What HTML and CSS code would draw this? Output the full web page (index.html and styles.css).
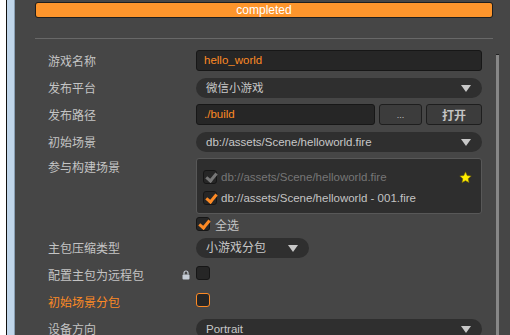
FILE: index.html
```html
<!DOCTYPE html>
<html lang="zh">
<head>
    <meta charset="UTF-8">
    <title>构建发布</title>
    <link rel="stylesheet" href="styles.css">
</head>
<body>
<div class="edge"></div>
<div class="panel">
    <div class="progress"><div class="progress-fill">completed</div></div>
    <hr class="divider">

    <div class="body">
        <div class="form">
            <div class="row">
                <label class="label">游戏名称</label>
                <div class="field"><div class="input accent">hello_world</div></div>
            </div>
            <div class="row">
                <label class="label">发布平台</label>
                <div class="field"><div class="select">微信小游戏<span class="arrow"></span></div></div>
            </div>
            <div class="row">
                <label class="label">发布路径</label>
                <div class="field path">
                    <div class="input accent">./build</div>
                    <button class="btn dots">...</button>
                    <button class="btn open">打开</button>
                </div>
            </div>
            <div class="row">
                <label class="label">初始场景</label>
                <div class="field"><div class="select">db://assets/Scene/helloworld.fire<span class="arrow"></span></div></div>
            </div>
            <div class="row tall">
                <label class="label">参与构建场景</label>
                <div class="field">
                    <div class="scene-list">
                        <div class="scene disabled">
                            <span class="check checked"></span>
                            <span class="scene-name">db://assets/Scene/helloworld.fire</span>
                            <svg class="star" width="13" height="13" viewBox="0 0 24 24"><path d="M12 1.5l3.2 7 7.5.7-5.7 5 1.7 7.4L12 17.8l-6.7 3.8 1.7-7.4-5.7-5 7.5-.7z" fill="#ffee00" stroke="#6b5a00" stroke-width="1"/></svg>
                        </div>
                        <div class="scene">
                            <span class="check checked"></span>
                            <span class="scene-name">db://assets/Scene/helloworld - 001.fire</span>
                        </div>
                    </div>
                    <div class="select-all">
                        <span class="check checked"></span>全选
                    </div>
                </div>
            </div>
            <div class="row">
                <label class="label">主包压缩类型</label>
                <div class="field"><div class="select short">小游戏分包<span class="arrow"></span></div></div>
            </div>
            <div class="row">
                <label class="label">配置主包为远程包
                    <svg class="lock" width="8" height="10" viewBox="0 0 8 10"><path d="M2 4.5V3a2 2 0 0 1 4 0v1.5" fill="none" stroke="#c6cdd6" stroke-width="1.2"/><rect x="0.5" y="4.5" width="7" height="5" rx="1" fill="#c6cdd6"/></svg>
                </label>
                <div class="field"><span class="check"></span></div>
            </div>
            <div class="row">
                <label class="label warn">初始场景分包</label>
                <div class="field"><span class="check hot"></span></div>
            </div>
            <div class="row">
                <label class="label">设备方向</label>
                <div class="field"><div class="select">Portrait<span class="arrow"></span></div></div>
            </div>
        </div>
        <div class="scrollbar"></div>
    </div>
</div>
</body>
</html>
```

FILE: styles.css
```css
html, body {
    margin: 0;
    padding: 0;
    height: 100%;
    overflow: hidden;
}

body {
    display: flex;
    background: #464646;
    font-family: "Liberation Sans", "Noto Sans CJK SC", sans-serif;
    font-size: 12px;
    color: #c4c4c4;
}

/* window edge on the left */
.edge {
    width: 6px;
    background: #fff;
    border-right: 1px solid #111;
    position: relative;
}

.edge::after {
    content: "";
    position: absolute;
    left: 7px;
    top: 0;
    bottom: 0;
    width: 7px;
    background: #c0d6ea;
    border-right: 1px solid #8aa0b4;
}

.panel {
    flex: 1;
    padding-left: 28px;
    display: flex;
    flex-direction: column;
}

.progress {
    width: 456px;
    margin-top: 2px;
    border: 1px solid #1e1e1e;
    border-radius: 3px;
    background: #1e1e1e;
}

.progress-fill {
    height: 14px;
    line-height: 14px;
    background: #fd952c;
    border-radius: 2px;
    color: #fff;
    text-align: center;
}

.divider {
    width: 458px;
    margin: 20px 0 0 0;
    border: none;
    border-top: 1px solid #686868;
}

.body {
    display: flex;
    flex: 1;
}

.form {
    width: 461px;
    padding-top: 11px;
}

.row {
    display: flex;
    align-items: center;
    height: 21px;
    margin-bottom: 6px;
}

.row.tall {
    align-items: flex-start;
    height: auto;
}

.row.tall .label {
    line-height: 21px;
}

.label {
    width: 161px;
    padding-left: 13px;
    padding-right: 6px;
    box-sizing: border-box;
    display: flex;
    align-items: center;
    justify-content: space-between;
}

.label.warn {
    color: #fd8a25;
}

.field {
    width: 286px;
}

.field.path {
    display: flex;
    gap: 4px;
}

.input {
    height: 19px;
    line-height: 19px;
    padding: 0 7px;
    background: #262626;
    border: 1px solid #171717;
    border-radius: 3px;
    font-size: 11.5px;
}

.input.accent {
    color: #fd8a25;
}

.field.path .input {
    flex: 1;
}

.btn {
    height: 21px;
    border: 1px solid #1e1e1e;
    border-radius: 3px;
    background: #3c3c3c;
    color: #c4c4c4;
    font-family: inherit;
    font-size: 12px;
    padding: 0;
}

.btn.dots {
    width: 43px;
    font-size: 9px;
}

.btn.open {
    width: 56px;
    font-weight: bold;
}

.select {
    position: relative;
    height: 20px;
    line-height: 20px;
    padding: 0 10px;
    background: #2f2f2f;
    border-radius: 10px;
    color: #c8c8c8;
    font-size: 11.5px;
}

.select.short {
    width: 93px;
    font-size: 12px;
}

.arrow {
    position: absolute;
    right: 11px;
    top: 7px;
    border-left: 5px solid transparent;
    border-right: 5px solid transparent;
    border-top: 7px solid #c8c8c8;
}

.scene-list {
    border: 1px solid #585858;
    border-radius: 3px;
    background: #2e2e2e;
    padding: 11px 5px 0 6px;
    box-sizing: border-box;
    width: 286px;
    height: 56px;
    font-size: 11.5px;
}

.scene {
    display: flex;
    align-items: center;
    height: 14px;
    margin-bottom: 7px;
    gap: 4px;
}

.scene.disabled .scene-name {
    color: #767676;
}

.scene.disabled .check.checked::after {
    border-color: #777;
}

.star {
    margin-left: auto;
    margin-right: 4px;
}

.check {
    display: inline-block;
    position: relative;
    width: 12px;
    height: 12px;
    background: #262626;
    border: 1px solid #161616;
    border-radius: 3px;
    flex: none;
}

.check.checked::after {
    content: "";
    position: absolute;
    left: 4px;
    top: 0;
    width: 4px;
    height: 8px;
    border-right: 3px solid #fd8a25;
    border-bottom: 3px solid #fd8a25;
    transform: rotate(40deg);
}

.check.hot {
    border-color: #fd8a25;
}

.select-all {
    display: flex;
    align-items: center;
    gap: 5px;
    margin-top: 3px;
    height: 14px;
}

.scrollbar {
    width: 3px;
    margin-top: 15px;
    background: #878787;
    border-top: 1px solid #222;
}
```
